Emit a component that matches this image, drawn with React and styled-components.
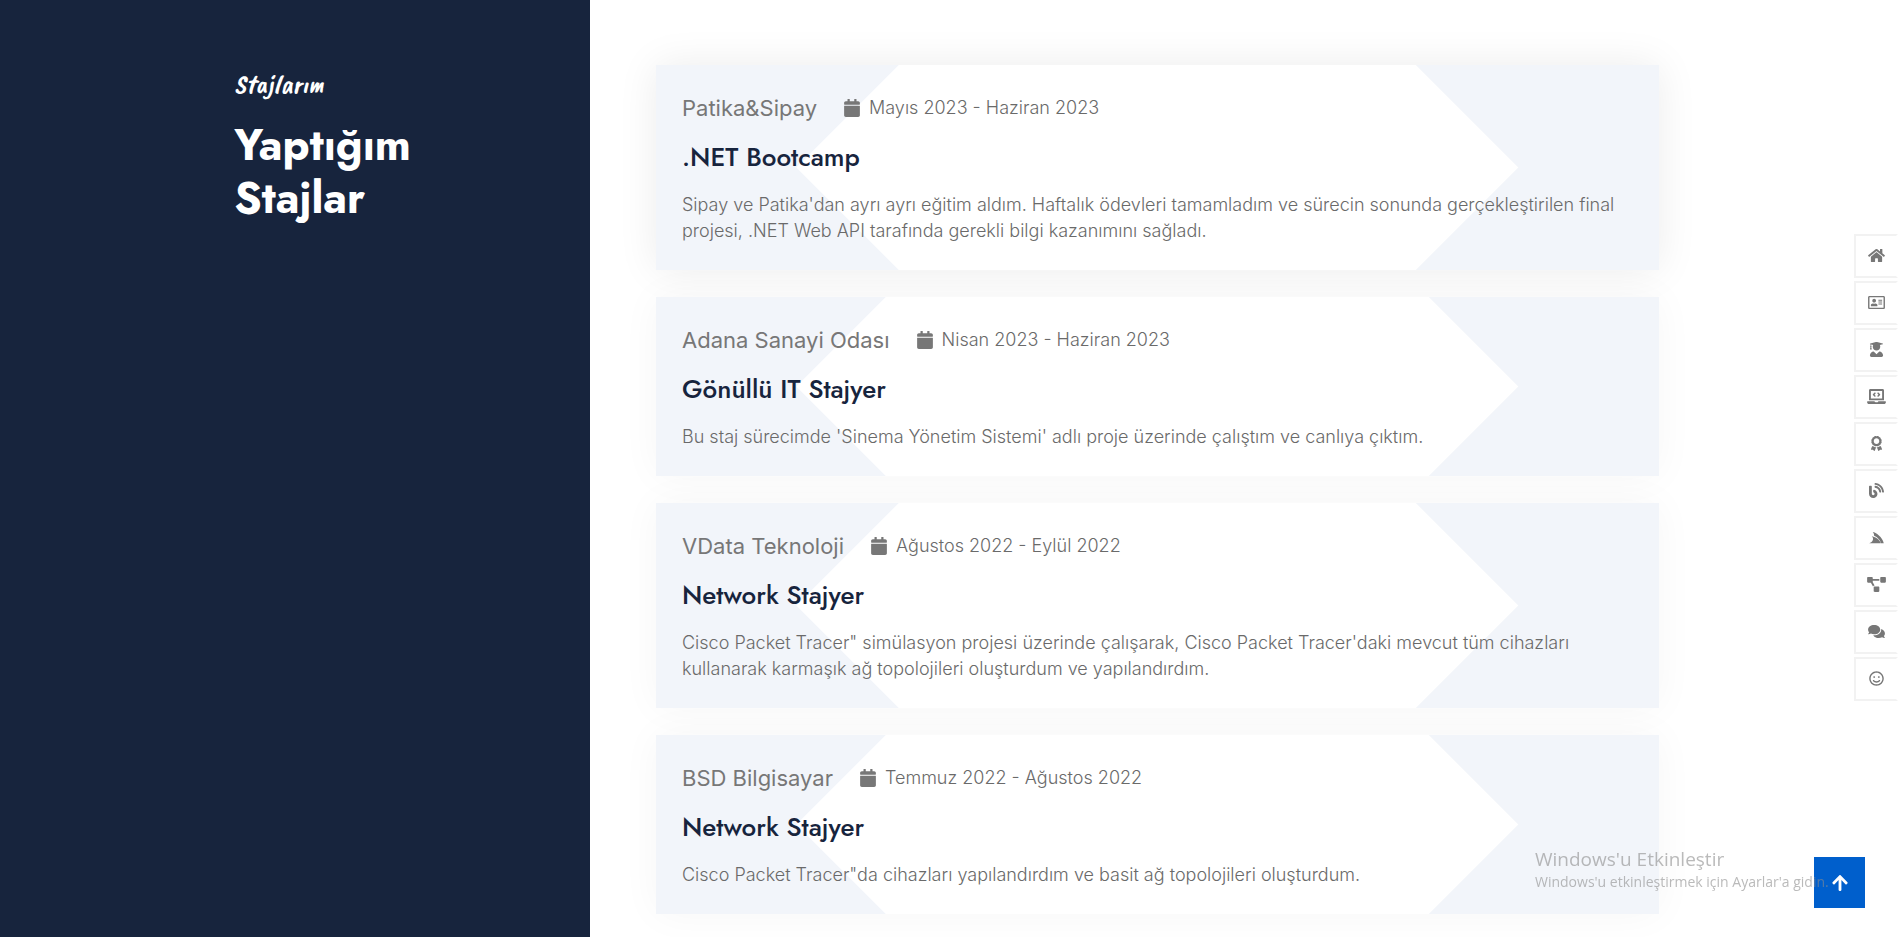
import React from "react";
import styled, { createGlobalStyle } from "styled-components";
import {
  FaHome,
  FaRegAddressCard,
  FaUserGraduate,
  FaLaptopCode,
  FaAward,
  FaBlog,
  FaServicestack,
  FaProjectDiagram,
  FaComments,
  FaRegSmile,
  FaCalendar,
  FaArrowUp,
} from "react-icons/fa";

const GlobalStyle = createGlobalStyle`
  *, *::before, *::after { box-sizing: border-box; }
  body {
    margin: 0;
    background: #fff;
    color: #6a6a6a;
    font: 300 18px/26px Inter, "Liberation Sans", sans-serif;
  }
  h1, h2, h3, p, ul { margin: 0; padding: 0; }
`;

const Page = styled.div`
  display: grid;
  grid-template-columns: 590fr 1308fr;
  min-height: 100vh;
`;

const Intro = styled.header`
  background: #17243d;
  color: #fff;
  padding: 66px 16px 66px 39.7%;
`;

const Eyebrow = styled.p`
  font: italic 400 27px/36px "Caveat Brush", Lato, sans-serif;
`;

const Heading = styled.h1`
  max-width: 200px;
  margin-top: 17px;
  font: 700 44px/53px Jost, Lato, sans-serif;
`;

const Internships = styled.main`
  display: flex;
  flex-direction: column;
  gap: 27px;
  padding: 65px 18.3% 23px 66px;
`;

const Card = styled.article`
  position: relative;
  padding: 26px;
  background: #f2f5fa;
  box-shadow: 0 0 38px rgba(0, 0, 0, ${(p) => (p.$raised ? 0.08 : 0.04)});

  &::before {
    content: "";
    position: absolute;
    inset: 0;
    background: #fff;
    clip-path: polygon(
      calc(50% - 361px) 50%,
      50% calc(50% - 361px),
      calc(50% + 361px) 50%,
      50% calc(50% + 361px)
    );
  }
`;

const CardBody = styled.div`
  position: relative;
`;

const Meta = styled.div`
  display: flex;
  align-items: center;
  gap: 26px;
  line-height: 34px;
`;

const Company = styled.span`
  color: #777;
  font-size: 22px;
  font-weight: 400;
`;

const Period = styled.span`
  display: flex;
  align-items: center;
  gap: 8px;

  svg {
    width: 18px;
    height: 18px;
    color: #777;
  }
`;

const Role = styled.h2`
  margin: 15px 0 18px;
  color: #17243d;
  font: 500 26px/34px Jost, Lato, sans-serif;
`;

const SideNav = styled.nav`
  position: fixed;
  top: 50%;
  right: 0;
  transform: translateY(-50%);

  ul {
    list-style: none;
  }

  li {
    padding-bottom: 3px;
  }
`;

const NavLink = styled.a`
  display: flex;
  align-items: center;
  justify-content: center;
  width: 44px;
  height: 44px;
  background: #fff;
  border: 2px solid #f2f2f2;
  border-right-color: #fff;
  color: #777;

  svg {
    width: 19px;
    height: 15px;
  }
`;

const ToTop = styled.button`
  position: fixed;
  right: 33px;
  bottom: 29px;
  display: flex;
  align-items: center;
  justify-content: center;
  width: 51px;
  height: 51px;
  padding: 0;
  border: 0;
  background: #005fcc;
  color: #fff;
  font-size: 18px;
`;

const Activation = styled.aside`
  position: fixed;
  right: 64px;
  bottom: 45px;
  width: 299px;
  color: rgba(140, 140, 140, 0.6);
  font: 400 14px/20px "Open Sans", sans-serif;
  white-space: nowrap;
  pointer-events: none;
`;

const ActivationTitle = styled.p`
  font-size: 19px;
  line-height: 26px;
`;

const links = [
  ["Ana Sayfa", FaHome],
  ["Hakkımda", FaRegAddressCard],
  ["Eğitim", FaUserGraduate],
  ["Yetenekler", FaLaptopCode],
  ["Sertifikalar", FaAward],
  ["Blog", FaBlog],
  ["Stajlar", FaServicestack],
  ["Projeler", FaProjectDiagram],
  ["Referanslar", FaComments],
  ["İletişim", FaRegSmile],
];

const internships = [
  {
    company: "Patika&Sipay",
    period: "Mayıs 2023 - Haziran 2023",
    role: ".NET Bootcamp",
    text: "Sipay ve Patika'dan ayrı ayrı eğitim aldım. Haftalık ödevleri tamamladım ve sürecin sonunda gerçekleştirilen final projesi, .NET Web API tarafında gerekli bilgi kazanımını sağladı.",
    raised: true,
  },
  {
    company: "Adana Sanayi Odası",
    period: "Nisan 2023 - Haziran 2023",
    role: "Gönüllü IT Stajyer",
    text: "Bu staj sürecimde 'Sinema Yönetim Sistemi' adlı proje üzerinde çalıştım ve canlıya çıktım.",
  },
  {
    company: "VData Teknoloji",
    period: "Ağustos 2022 - Eylül 2022",
    role: "Network Stajyer",
    text: "Cisco Packet Tracer\" simülasyon projesi üzerinde çalışarak, Cisco Packet Tracer'daki mevcut tüm cihazları kullanarak karmaşık ağ topolojileri oluşturdum ve yapılandırdım.",
  },
  {
    company: "BSD Bilgisayar",
    period: "Temmuz 2022 - Ağustos 2022",
    role: "Network Stajyer",
    text: "Cisco Packet Tracer\"da cihazları yapılandırdım ve basit ağ topolojileri oluşturdum.",
  },
];

export default function App() {
  return (
    <>
      <GlobalStyle />
      <Page>
        <Intro>
          <Eyebrow>Stajlarım</Eyebrow>
          <Heading>Yaptığım Stajlar</Heading>
        </Intro>
        <Internships>
          {internships.map((item) => (
            <Card key={item.company} $raised={item.raised}>
              <CardBody>
                <Meta>
                  <Company>{item.company}</Company>
                  <Period>
                    <FaCalendar aria-hidden="true" />
                    {item.period}
                  </Period>
                </Meta>
                <Role>{item.role}</Role>
                <p>{item.text}</p>
              </CardBody>
            </Card>
          ))}
        </Internships>
      </Page>
      <SideNav>
        <ul>
          {links.map(([label, Icon]) => (
            <li key={label}>
              <NavLink href="#" aria-label={label}>
                <Icon aria-hidden="true" />
              </NavLink>
            </li>
          ))}
        </ul>
      </SideNav>
      <ToTop type="button" aria-label="Yukarı çık">
        <FaArrowUp aria-hidden="true" />
      </ToTop>
      <Activation>
        <ActivationTitle>Windows'u Etkinleştir</ActivationTitle>
        <p>Windows'u etkinleştirmek için Ayarlar'a gidin.</p>
      </Activation>
    </>
  );
}
